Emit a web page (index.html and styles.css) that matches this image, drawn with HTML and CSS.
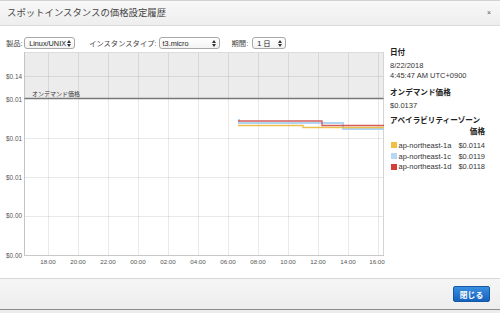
FILE: index.html
```html
<!DOCTYPE html>
<html lang="ja">
<head>
    <meta charset="UTF-8">
    <meta name="viewport" content="width=device-width, initial-scale=1.0">
    <title>スポットインスタンスの価格設定履歴</title>
    <link rel="stylesheet" href="styles.css">
</head>
<body>
<div class="dialog">
    <div class="dlg-head">
        <h1>スポットインスタンスの価格設定履歴</h1>
        <span class="close">×</span>
    </div>

    <div class="dlg-body">
        <div class="chart-col">
            <div class="filters">
                <span class="flabel">製品:</span>
                <span class="fselect sel-os">Linux/UNIX
                    <svg class="arrows" width="4" height="7" viewBox="0 0 4 7"><polygon points="0,3 2,0 4,3"/><polygon points="0,4 2,7 4,4"/></svg>
                </span>
                <span class="flabel gap">インスタンスタイプ:</span>
                <span class="fselect sel-type">t3.micro
                    <svg class="arrows" width="4" height="7" viewBox="0 0 4 7"><polygon points="0,3 2,0 4,3"/><polygon points="0,4 2,7 4,4"/></svg>
                </span>
                <span class="flabel gap2">期間:</span>
                <span class="fselect sel-range">1 日
                    <svg class="arrows" width="4" height="7" viewBox="0 0 4 7"><polygon points="0,3 2,0 4,3"/><polygon points="0,4 2,7 4,4"/></svg>
                </span>
            </div>

            <svg class="chart" width="386" height="222" viewBox="0 50 386 222">
                <!-- area above on-demand price -->
                <rect x="24.5" y="52" width="359" height="46.5" fill="#ececec"/>

                <g class="grid">
                    <line x1="24" y1="76.5" x2="383" y2="76.5"/>
                    <line x1="24" y1="138.5" x2="383" y2="138.5"/>
                    <line x1="24" y1="177.5" x2="383" y2="177.5"/>
                    <line x1="24" y1="216.5" x2="383" y2="216.5"/>
                    <line x1="48.5" y1="52" x2="48.5" y2="255"/>
                    <line x1="78.5" y1="52" x2="78.5" y2="255"/>
                    <line x1="108.5" y1="52" x2="108.5" y2="255"/>
                    <line x1="138.5" y1="52" x2="138.5" y2="255"/>
                    <line x1="168.5" y1="52" x2="168.5" y2="255"/>
                    <line x1="198.5" y1="52" x2="198.5" y2="255"/>
                    <line x1="228.5" y1="52" x2="228.5" y2="255"/>
                    <line x1="258.5" y1="52" x2="258.5" y2="255"/>
                    <line x1="288.5" y1="52" x2="288.5" y2="255"/>
                    <line x1="318.5" y1="52" x2="318.5" y2="255"/>
                    <line x1="348.5" y1="52" x2="348.5" y2="255"/>
                    <line x1="378.5" y1="52" x2="378.5" y2="255"/>
                </g>

                <line x1="24.5" y1="52.5" x2="383.5" y2="52.5" stroke="#dcdcdc"/>
                <line x1="383.5" y1="52" x2="383.5" y2="255" stroke="#d4d4d4"/>
                <line x1="24.5" y1="52" x2="24.5" y2="256" stroke="#c4c4c4"/>
                <line x1="24" y1="255.5" x2="384" y2="255.5" stroke="#c8c8c8"/>

                <!-- on-demand price -->
                <line x1="24.5" y1="98.5" x2="383.5" y2="98.5" stroke="#777" stroke-width="1.3"/>
                <text class="od-label" x="32" y="96">オンデマンド価格</text>

                <!-- price history -->
                <polyline class="series" points="239,119 239,123 343,123 343,129 384,129" stroke="#a9cfee" stroke-width="2"/>
                <polyline class="series" points="238,125.5 303,125.5 303,127.5 384,127.5" stroke="#ebb93a" stroke-width="1.4"/>
                <polyline class="series" points="238,121 322,121 322,125.5 384,125.5" stroke="#cf4a48" stroke-width="1.3"/>

                <g class="ylabels">
                    <text x="6" y="79">$0.14</text>
                    <text x="6" y="101.5">$0.01</text>
                    <text x="6" y="141">$0.01</text>
                    <text x="6" y="179.5">$0.01</text>
                    <text x="6" y="218">$0.00</text>
                    <text x="6" y="257.5">$0.00</text>
                </g>
                <g class="xlabels">
                    <text x="48" y="264">18:00</text>
                    <text x="78" y="264">20:00</text>
                    <text x="108" y="264">22:00</text>
                    <text x="138" y="264">00:00</text>
                    <text x="168" y="264">02:00</text>
                    <text x="198" y="264">04:00</text>
                    <text x="228" y="264">06:00</text>
                    <text x="258" y="264">08:00</text>
                    <text x="288" y="264">10:00</text>
                    <text x="318" y="264">12:00</text>
                    <text x="348" y="264">14:00</text>
                    <text x="377" y="264">16:00</text>
                </g>
            </svg>
        </div>

        <div class="details">
            <h3>日付</h3>
            <p>8/22/2018</p>
            <p>4:45:47 AM UTC+0900</p>

            <h3 class="sec">オンデマンド価格</h3>
            <p>$0.0137</p>

            <h3 class="sec az">アベイラビリティーゾーン</h3>
            <h3 class="price-head">価格</h3>
            <ul class="legend">
                <li><span class="swatch sw-a"></span>ap-northeast-1a<span class="price">$0.0114</span></li>
                <li><span class="swatch sw-c"></span>ap-northeast-1c<span class="price">$0.0119</span></li>
                <li><span class="swatch sw-d"></span>ap-northeast-1d<span class="price">$0.0118</span></li>
            </ul>
        </div>
    </div>

    <div class="dlg-foot">
        <button class="btn-close">閉じる</button>
    </div>
</div>
</body>
</html>
```

FILE: styles.css
```css
* {
    padding: 0;
    margin: 0;
    box-sizing: border-box;
}

body {
    background: #ececec;
    font-family: "Liberation Sans", "Noto Sans CJK JP", sans-serif;
    color: #333;
}

.dialog {
    width: 500px;
    height: 310px;
    background: #fff;
    border-bottom: 1px solid #8c8c8c;
    box-shadow: 0 1px 2px rgba(0, 0, 0, 0.25);
}

/* header */
.dlg-head {
    height: 26px;
    display: flex;
    align-items: center;
    justify-content: space-between;
    padding: 0 9px 0 7px;
    border-top: 1px solid #d2d2d2;
    border-bottom: 1px solid #dadada;
    background: linear-gradient(#f8f8f8, #eeeeee);
}
.dlg-head h1 {
    font-size: 9.4px;
    font-weight: normal;
    color: #444;
    line-height: 12px;
}
.close {
    font-size: 7px;
    color: #555;
    line-height: 8px;
}

/* body */
.dlg-body {
    height: 252px;
    display: flex;
}
.chart-col {
    width: 386px;
}
.filters {
    display: flex;
    align-items: center;
    height: 12px;
    margin-top: 11px;
    margin-bottom: 1px;
    padding-left: 6px;
    font-size: 7.3px;
}
.flabel {
    color: #444;
    margin-right: 1.5px;
}
.flabel.gap {
    margin-left: 14px;
    margin-right: 2px;
}
.flabel.gap2 {
    margin-left: 12px;
    margin-right: 4px;
}
.fselect {
    height: 12px;
    display: flex;
    align-items: center;
    justify-content: space-between;
    padding: 0 3px 0 4px;
    border: 1px solid #a8a8a8;
    border-radius: 3px;
    background: linear-gradient(#ffffff, #f3f3f3);
    color: #222;
}
.sel-os { width: 51px; }
.sel-type { width: 61px; padding-left: 3px; }
.sel-range { width: 34px; }
.arrows polygon {
    fill: #333;
}

.chart {
    display: block;
}
.grid line {
    stroke: rgba(0, 0, 0, 0.085);
    stroke-width: 1;
}
.series {
    fill: none;
    opacity: 0.9;
}
.od-label {
    font-size: 6px;
    fill: #333;
}
.ylabels text {
    font-size: 6.4px;
    fill: #555;
}
.xlabels text {
    font-size: 6.2px;
    fill: #555;
    text-anchor: middle;
}

/* details panel */
.details {
    margin-left: 4px;
    width: 95px;
    padding-top: 21px;
    font-size: 7.5px;
}
.details h3 {
    font-size: 7.6px;
    font-weight: bold;
    line-height: 11px;
    margin-bottom: 3px;
    color: #222;
}
.details p {
    line-height: 10px;
}
.details h3.sec {
    margin-top: 6px;
}
.details h3.az {
    margin-top: 5px;
    margin-bottom: 0;
    line-height: 10.5px;
    white-space: nowrap;
}
.details h3.price-head {
    text-align: right;
    line-height: 10.5px;
}
.legend {
    list-style: none;
    margin-top: 1px;
}
.legend li {
    display: flex;
    align-items: center;
    height: 10.8px;
    white-space: nowrap;
}
.swatch {
    width: 6px;
    height: 6px;
    margin: 0 1.5px 0 1px;
}
.sw-a { background: #f0c043; }
.sw-c { background: #b6d8f4; }
.sw-d { background: #d3403c; }
.price {
    margin-left: auto;
}

/* footer */
.dlg-foot {
    height: 31px;
    display: flex;
    align-items: center;
    justify-content: flex-end;
    padding-right: 10px;
    border-top: 1px solid #d8d8d8;
    background: linear-gradient(#f6f6f6, #ededed);
}
.btn-close {
    width: 37px;
    height: 16px;
    font-family: "Liberation Sans", "Noto Sans CJK JP", sans-serif;
    font-size: 7.8px;
    font-weight: bold;
    color: #fff;
    border: 1px solid #1558a6;
    border-radius: 2px;
    background: linear-gradient(#3a8ee0, #1663bd);
}
```
